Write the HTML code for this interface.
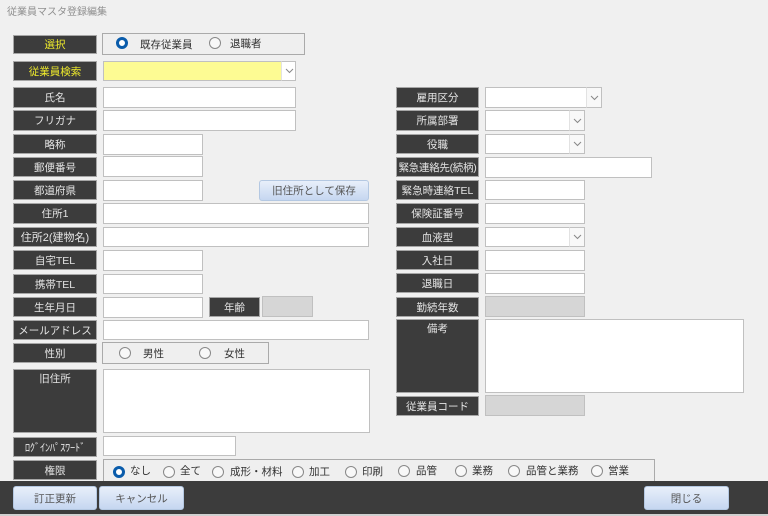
<!DOCTYPE html>
<html lang="ja"><head><meta charset="utf-8"><title>従業員マスタ登録編集</title>
<style>
html,body{margin:0;padding:0;background:#f0f0f0}
#w{position:absolute;left:0;top:0;width:768px;height:516px;overflow:hidden;background:#f0f0f0;font-family:"Liberation Sans","Noto Sans CJK JP",sans-serif;font-size:10.5px;color:#333;filter:blur(.3px)}
body{width:768px;height:516px;overflow:hidden;position:relative}
.a{position:absolute;box-sizing:border-box}
.l{position:absolute;box-sizing:border-box;background:#3c3c3c;border:1px solid #a6a6a6;color:#e4e4e4;text-align:center;font-size:10.5px;white-space:nowrap;display:flex;align-items:center;justify-content:center;left:13px;width:84px}
.r{left:396px;width:83px}
.y{color:#eeea2c}
.i{position:absolute;box-sizing:border-box;background:#fff;border:1px solid #c0c0c0}
.g{background:#d6d6d6}
.c{position:absolute;box-sizing:border-box;background:#f8f8f8;border:1px solid #c0c0c0;border-left:1px solid #e2e2e2}
.c svg{position:absolute;left:3px;top:50%;margin-top:-3px}
.b{position:absolute;box-sizing:border-box;border:1px solid #b4c8e2;border-radius:3px;background:linear-gradient(#e8effa,#c5d6f0);color:#555;font-size:10.5px;display:flex;align-items:center;justify-content:center;white-space:nowrap}
.f{position:absolute;box-sizing:border-box;border:1px solid #aaa;background:#efefef}
.o{position:absolute;box-sizing:border-box;width:12px;height:12px;border:1px solid #888;border-radius:50%;background:#f8f8f8}
.s{width:12px;height:12px;border:3.5px solid #0a5cab;background:#fff}
.t{position:absolute;font-size:10.5px;color:#333;white-space:nowrap;line-height:14px}
</style></head><body><div id="w">
<div class="t" style="left:7px;top:6px;color:#8f8f8f;font-size:10px">従業員マスタ登録編集</div>

<div class="l y" style="top:35px;height:19px">選択</div>
<div class="f" style="left:102px;top:33px;width:203px;height:22px"></div>
<div class="o s" style="left:116px;top:37px"></div><div class="t" style="left:140px;top:38px">既存従業員</div>
<div class="o" style="left:209px;top:37px"></div><div class="t" style="left:230px;top:37px">退職者</div>

<div class="l y" style="top:61px;height:20px">従業員検索</div>
<div class="i" style="left:103px;top:61px;width:193px;height:20px;background:#fdfb93"></div>
<div class="c" style="left:281px;top:61px;width:15px;height:20px;background:#fff"><svg width="9" height="6" viewBox="0 0 9 6"><path d="M1 1l3.5 3.5L8 1" fill="none" stroke="#888"/></svg></div>

<div class="l" style="top:87px;height:21px">氏名</div><div class="i" style="left:103px;top:87px;width:193px;height:21px"></div>
<div class="l" style="top:110px;height:21px">フリガナ</div><div class="i" style="left:103px;top:110px;width:193px;height:21px"></div>
<div class="l" style="top:134px;height:20px">略称</div><div class="i" style="left:103px;top:134px;width:100px;height:21px"></div>
<div class="l" style="top:157px;height:20px">郵便番号</div><div class="i" style="left:103px;top:156px;width:100px;height:21px"></div>
<div class="l" style="top:180px;height:20px">都道府県</div><div class="i" style="left:103px;top:180px;width:100px;height:21px"></div>
<div class="b" style="left:259px;top:180px;width:110px;height:21px">旧住所として保存</div>
<div class="l" style="top:203px;height:21px">住所1</div><div class="i" style="left:103px;top:203px;width:266px;height:21px"></div>
<div class="l" style="top:227px;height:20px;font-size:11px">住所2(建物名)</div><div class="i" style="left:103px;top:227px;width:266px;height:20px"></div>
<div class="l" style="top:250px;height:20px">自宅TEL</div><div class="i" style="left:103px;top:250px;width:100px;height:21px"></div>
<div class="l" style="top:274px;height:20px">携帯TEL</div><div class="i" style="left:103px;top:274px;width:100px;height:20px"></div>
<div class="l" style="top:297px;height:20px">生年月日</div><div class="i" style="left:103px;top:297px;width:100px;height:21px"></div>
<div class="l" style="left:209px;top:297px;width:51px;height:20px">年齢</div><div class="i g" style="left:262px;top:296px;width:51px;height:21px"></div>
<div class="l" style="top:320px;height:20px">メールアドレス</div><div class="i" style="left:103px;top:320px;width:266px;height:20px"></div>

<div class="l" style="top:343px;height:20px">性別</div>
<div class="f" style="left:102px;top:342px;width:167px;height:22px"></div>
<div class="o" style="left:119px;top:347px"></div><div class="t" style="left:143px;top:347px">男性</div>
<div class="o" style="left:199px;top:347px"></div><div class="t" style="left:224px;top:347px">女性</div>

<div class="l" style="top:369px;height:64px;align-items:flex-start;padding-top:1px">旧住所</div><div class="i" style="left:103px;top:369px;width:267px;height:64px"></div>
<div class="l" style="top:437px;height:20px;font-size:10.5px;letter-spacing:-.3px">ﾛｸﾞｲﾝﾊﾟｽﾜｰﾄﾞ</div><div class="i" style="left:103px;top:436px;width:133px;height:20px"></div>
<div class="l" style="top:460px;height:20px">権限</div>

<div class="f" style="left:103px;top:459px;width:552px;height:23px;border-bottom:0"></div>
<div class="o s" style="left:113px;top:466px"></div><div class="t" style="left:130px;top:464px">なし</div>
<div class="o" style="left:163px;top:466px"></div><div class="t" style="left:180px;top:464px">全て</div>
<div class="o" style="left:212px;top:466px"></div><div class="t" style="left:230px;top:465px">成形・材料</div>
<div class="o" style="left:292px;top:466px"></div><div class="t" style="left:309px;top:465px">加工</div>
<div class="o" style="left:345px;top:466px"></div><div class="t" style="left:362px;top:465px">印刷</div>
<div class="o" style="left:398px;top:465px"></div><div class="t" style="left:416px;top:464px">品管</div>
<div class="o" style="left:455px;top:465px"></div><div class="t" style="left:472px;top:464px">業務</div>
<div class="o" style="left:508px;top:465px"></div><div class="t" style="left:526px;top:464px">品管と業務</div>
<div class="o" style="left:591px;top:465px"></div><div class="t" style="left:608px;top:464px">営業</div>

<div class="l r" style="top:87px;height:21px">雇用区分</div>
<div class="i" style="left:485px;top:87px;width:117px;height:21px"></div>
<div class="c" style="left:586px;top:87px;width:16px;height:21px"><svg width="9" height="6" viewBox="0 0 9 6"><path d="M1 1l3.5 3.5L8 1" fill="none" stroke="#888"/></svg></div>
<div class="l r" style="top:110px;height:21px">所属部署</div>
<div class="i" style="left:485px;top:110px;width:100px;height:21px"></div>
<div class="c" style="left:569px;top:110px;width:16px;height:21px"><svg width="9" height="6" viewBox="0 0 9 6"><path d="M1 1l3.5 3.5L8 1" fill="none" stroke="#888"/></svg></div>
<div class="l r" style="top:134px;height:20px">役職</div>
<div class="i" style="left:485px;top:134px;width:100px;height:20px"></div>
<div class="c" style="left:569px;top:134px;width:16px;height:20px"><svg width="9" height="6" viewBox="0 0 9 6"><path d="M1 1l3.5 3.5L8 1" fill="none" stroke="#888"/></svg></div>
<div class="l r" style="top:157px;height:20px;font-size:10.5px;letter-spacing:-.3px">緊急連絡先(続柄)</div>
<div class="i" style="left:485px;top:157px;width:167px;height:21px"></div>
<div class="l r" style="top:180px;height:20px;font-size:10.5px">緊急時連絡TEL</div>
<div class="i" style="left:485px;top:180px;width:100px;height:20px"></div>
<div class="l r" style="top:203px;height:21px">保険証番号</div>
<div class="i" style="left:485px;top:203px;width:100px;height:21px"></div>
<div class="l r" style="top:227px;height:20px">血液型</div>
<div class="i" style="left:485px;top:227px;width:100px;height:20px"></div>
<div class="c" style="left:569px;top:227px;width:16px;height:20px"><svg width="9" height="6" viewBox="0 0 9 6"><path d="M1 1l3.5 3.5L8 1" fill="none" stroke="#888"/></svg></div>
<div class="l r" style="top:250px;height:20px">入社日</div>
<div class="i" style="left:485px;top:250px;width:100px;height:21px"></div>
<div class="l r" style="top:273px;height:20px">退職日</div>
<div class="i" style="left:485px;top:273px;width:100px;height:21px"></div>
<div class="l r" style="top:297px;height:20px">勤続年数</div>
<div class="i g" style="left:485px;top:296px;width:100px;height:21px"></div>
<div class="l r" style="top:319px;height:74px;align-items:flex-start;padding-top:1px">備考</div>
<div class="i" style="left:485px;top:319px;width:259px;height:74px"></div>
<div class="l r" style="top:396px;height:20px">従業員コード</div>
<div class="i g" style="left:485px;top:395px;width:100px;height:21px"></div>

<div class="a" style="left:0;top:481px;width:768px;height:33px;background:#3c3c3c"></div>
<div class="a" style="left:0;top:514px;width:768px;height:2px;background:#d0d0d0"></div>
<div class="b" style="left:13px;top:486px;width:84px;height:24px">訂正更新</div>
<div class="b" style="left:99px;top:486px;width:85px;height:24px">キャンセル</div>
<div class="b" style="left:644px;top:486px;width:85px;height:24px">閉じる</div>
</div></body></html>
